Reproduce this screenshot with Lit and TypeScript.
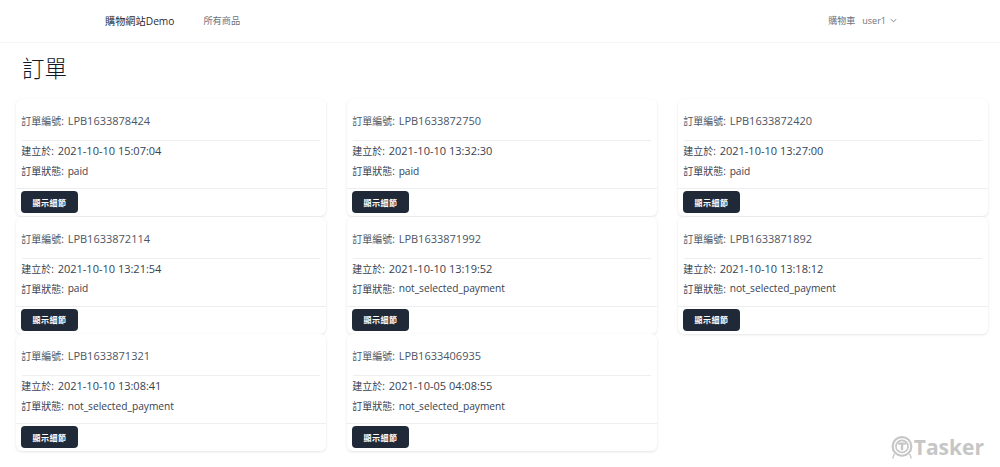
import { LitElement, html, css, svg } from "lit";
import { customElement } from "lit/decorators.js";

const orders = [
  ["LPB1633878424", "2021-10-10 15:07:04", "paid"],
  ["LPB1633872750", "2021-10-10 13:32:30", "paid"],
  ["LPB1633872420", "2021-10-10 13:27:00", "paid"],
  ["LPB1633872114", "2021-10-10 13:21:54", "paid"],
  ["LPB1633871992", "2021-10-10 13:19:52", "not_selected_payment"],
  ["LPB1633871892", "2021-10-10 13:18:12", "not_selected_payment"],
  ["LPB1633871321", "2021-10-10 13:08:41", "not_selected_payment"],
  ["LPB1633406935", "2021-10-05 04:08:55", "not_selected_payment"],
];

@customElement("app-root")
export class AppRoot extends LitElement {
  static styles = css`
    :host {
      display: block;
      position: relative;
      height: 467px;
      overflow: hidden;
      background: #fff;
      color: #374151;
      font-family: "Open Sans", "Noto Sans CJK TC", sans-serif;
      font-size: 11px;
    }
    .nav {
      height: 43px;
      box-sizing: border-box;
      border-bottom: 1px solid #f6f6f7;
      display: flex;
      align-items: center;
      padding: 0 103px 2px 105px;
    }
    .brand { font-size: 10.2px; color: #1f2937; }
    .link { margin-left: 29px; font-size: 9.2px; color: #6b7280; }
    .right { margin-left: auto; display: flex; align-items: center; font-size: 9px; color: #6b7280; }
    .user { margin-left: 7px; }
    .chev { margin-left: 4px; width: 7px; height: 7px; }
    h1 {
      margin: 0;
      font-weight: 300;
      font-size: 22.5px;
      line-height: 34px;
      color: #111827;
      padding: 9px 0 0 22px;
      height: 47px;
    }
    .grid {
      display: grid;
      grid-template-columns: repeat(3, 310px);
      column-gap: 21px;
      grid-auto-rows: 117px;
      row-gap: 0.5px;
      padding-left: 16px;
    }
    .card {
      border-radius: 6px;
      background: #fff;
      box-shadow: 0 1px 3px rgba(0, 0, 0, 0.11);
      display: flex;
      flex-direction: column;
      height: 117px;
    }
    .lbl { font-size: 10px; margin: 0 3.7px 0 -0.7px; }
    .head { margin: 0 6px; height: 42px; box-sizing: border-box; border-bottom: 1px solid #eceef1; display: flex; align-items: center; padding-top: 2px; color: #4b5563; }
    .body { height: 48px; box-sizing: border-box; padding: 0 6px 1px; display: flex; flex-direction: column; border-bottom: 1px solid #eceef1; }
    .body div { height: 21px; display: flex; align-items: center; }
    .body div:first-child { height: 19px; }
    .st { font-size: 10.2px; }
    .foot { padding: 2px 5px; }
    button {
      display: block;
      width: 57px;
      height: 22px;
      padding: 0;
      border: 0;
      border-radius: 4px;
      background: #1f2937;
      color: #fff;
      font: 600 8px "Open Sans", "Noto Sans CJK TC", sans-serif;
      letter-spacing: 0.5px;
    }
    .mark {
      position: absolute;
      right: 16px;
      bottom: 6px;
      display: flex;
      align-items: center;
      color: #c6c6c6;
      font: 700 21px "Open Sans", sans-serif;
    }
    .mark svg { width: 22px; height: 25px; margin-right: 1px; }
  `;

  render() {
    return html`
      <div class="nav">
        <span class="brand">購物網站Demo</span>
        <span class="link">所有商品</span>
        <div class="right">
          <span>購物車</span><span class="user">user1</span>
          <svg class="chev" viewBox="0 0 8 8" fill="none" stroke="#6b7280" stroke-width="1"><path d="M1 2.5 4 5.5 7 2.5" /></svg>
        </div>
      </div>
      <h1>訂單</h1>
      <div class="grid">
        ${orders.map(
          ([id, at, st]) => html`
            <div class="card">
              <div class="head"><span class="lbl">訂單編號:</span>${id}</div>
              <div class="body">
                <div><span class="lbl">建立於:</span>${at}</div>
                <div><span class="lbl">訂單狀態:</span><span class="st">${st}</span></div>
              </div>
              <div class="foot"><button>顯示細節</button></div>
            </div>
          `
        )}
      </div>
      <div class="mark">
        <svg viewBox="0 0 20 22" fill="none" stroke="#c6c6c6">
          ${svg`<circle cx="10" cy="10" r="8.5" stroke-width="2"/><circle cx="10" cy="10" r="5.5" stroke-width="1.5"/>
          <path d="M6.5 7.5h7M10 7.5v6" stroke-width="2.2"/><path d="M3 17 1.5 21M17 17l1.5 4" stroke-width="1.2"/>`}
        </svg>
        <span>Tasker</span>
      </div>
    `;
  }
}
